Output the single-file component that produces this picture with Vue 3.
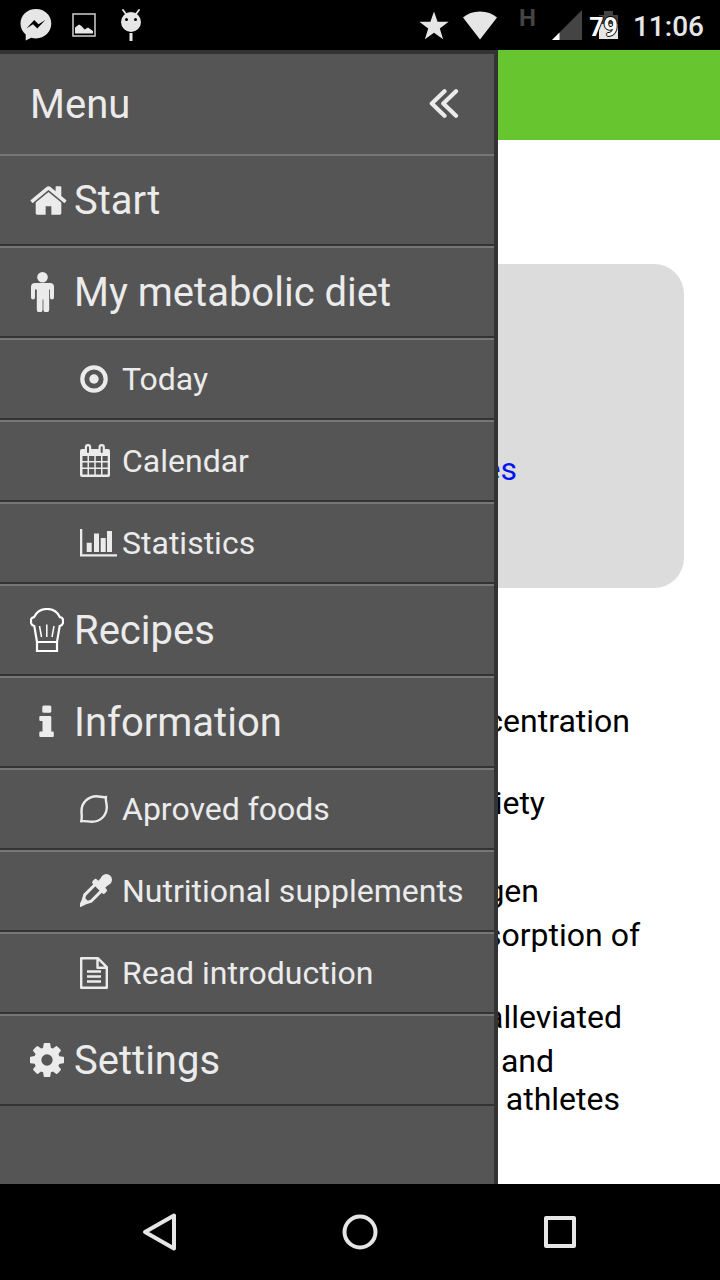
<script setup>
const menu = [
  { label: 'Start', icon: 'home' },
  { label: 'My metabolic diet', icon: 'person' },
  { label: 'Today', icon: 'target', sub: true },
  { label: 'Calendar', icon: 'calendar', sub: true },
  { label: 'Statistics', icon: 'chart', sub: true },
  { label: 'Recipes', icon: 'chef' },
  { label: 'Information', icon: 'info' },
  { label: 'Aproved foods', icon: 'leaf', sub: true },
  { label: 'Nutritional supplements', icon: 'dropper', sub: true },
  { label: 'Read introduction', icon: 'file', sub: true },
  { label: 'Settings', icon: 'gear' }
]

// Every benefit is a list of lines; `end` is the free space right of the line.
const benefits = [
  [{ text: 'concentration', end: 90 }, { text: '', end: 0 }],
  [{ text: 'iety', end: 175 }],
  [{ text: '', end: 0 }],
  [{ text: 'gen', end: 181 }],
  [{ text: 'sorption of', end: 80 }, { text: '', end: 0 }],
  [{ text: 'alleviated', end: 98 }],
  [{ text: 'and', end: 166 }, { text: 'athletes', end: 100 }]
]
</script>

<template>
  <div class="screen">
    <header class="status">
      <div class="notes">
        <svg width="32" height="32" viewBox="0 0 32 32">
          <path d="M16 0C7 0 .5 6.3.5 14.5c0 4.6 2 8.300 5.200 11V31.500l5.500-2.700c1.500.4 3.100.6 4.800.6 8.700 0 15.300-6.500 15.300-14.800S24.700 0 16 0z" fill="#e6e6e6" />
          <path d="M6.500 19.500L14.200 11l4.300 4.200 6.800-4.200-8 8.500-4.300-4.200z" fill="#000" />
        </svg>
        <svg width="24" height="24" viewBox="0 0 24 24">
          <rect x="1" y="1" width="22" height="22" fill="none" stroke="#c4c4c4" stroke-width="1.600" />
          <path d="M3 20.500v-6l4-3 2.500 1.500 3 3.500 3.500-2 5 3.500v2.500z" fill="#e6e6e6" />
        </svg>
        <svg width="22" height="32" viewBox="0 0 22 32">
          <path d="M3 1l3 4M19 1l-3 4" stroke="#e6e6e6" stroke-width="1.800" stroke-linecap="round" />
          <circle cx="11" cy="13" r="10" fill="#e6e6e6" />
          <circle cx="6.500" cy="10.500" r="1.500" fill="#000" />
          <circle cx="15.500" cy="10.500" r="1.500" fill="#000" />
          <rect x="9.500" y="24" width="3" height="8" fill="#e6e6e6" />
        </svg>
      </div>
      <div class="signals">
        <svg width="30" height="29" viewBox="0 0 30 29">
          <path d="M15 .5l3.600 10.300h11l-8.800 6.700 3.300 10.700L15 21.700l-9.100 6.500 3.300-10.700L.4 10.800h11z" fill="#e6e6e6" />
        </svg>
        <svg class="wifi" width="36" height="29" viewBox="0 0 36 29">
          <path d="M1 6.500C5.500 2.500 11 .5 18 .5s12.500 2 17 6L18 28.500z" fill="#e6e6e6" />
        </svg>
        <span class="network">H</span>
        <svg class="bars" width="30" height="30" viewBox="0 0 30 30">
          <path d="M30 0v30H0z" fill="#444" />
          <path d="M7.500 22.500V30H0z" fill="#fff" />
        </svg>
        <span class="battery">
          <svg width="20" height="30" viewBox="0 0 20 30">
            <path d="M5 1h9v4h5v9H0V5h5z" fill="#444" />
            <path d="M0 14h19v15H0z" fill="#e6e6e6" />
          </svg>
          <span class="level">79</span>
        </span>
        <time class="clock">11:06</time>
      </div>
    </header>

    <div class="stage">
      <main class="page">
        <div class="topbar"></div>
        <section class="card"><a href="#recipes">recipes</a></section>
        <ul class="benefits">
          <li v-for="(item, i) in benefits" :key="i">
            <span v-for="(line, j) in item" :key="j" :style="{ paddingRight: line.end + 'px' }">{{ line.text }}</span>
          </li>
        </ul>
      </main>

      <aside class="drawer">
        <div class="head">
          <h1>Menu</h1>
          <button type="button" aria-label="Close menu">
            <svg width="30" height="30" viewBox="0 0 30 30" fill="none" stroke="#ebebeb" stroke-width="4.200" stroke-linecap="round" stroke-linejoin="round">
              <path d="M15.500 2.300L2.800 14.500l12.700 12.200M27 2.300L14.300 14.500 27 26.700" />
            </svg>
          </button>
        </div>
        <nav>
          <a v-for="item in menu" :key="item.label" href="#" class="item" :class="{ sub: item.sub }">
            <span class="icon">
              <svg v-if="item.icon === 'home'" width="37" height="29" viewBox="64 256 1664 1280">
                <path d="M1472 992v480q0 26-19 45t-45 19h-384v-384h-256v384h-384q-26 0-45-19t-19-45v-480q0-1 .5-3t.5-3l575-474 575 474q1 2 1 6zm223-69l-62 74q-8 9-21 11h-3q-13 0-21-7l-692-577-692 577q-12 8-24 7-13-2-21-11l-62-74q-8-10-7-23.500t11-21.500l719-599q32-26 76-26t76 26l244 204v-195q0-14 9-23t23-9h192q14 0 23 9t9 23v408l219 182q10 8 11 21.500t-7 23.500z" />
              </svg>
              <svg v-else-if="item.icon === 'person'" width="26" height="40" viewBox="0 0 26 40">
                <circle cx="12.500" cy="5.300" r="5.300" />
                <path d="M5 11h15a4 4 0 0 1 4 4v10.500a2 2 0 0 1-4 0v-8h-.8v20a2.600 2.600 0 0 1-5.800 0V27.500h-.8v10a2.600 2.600 0 0 1-5.800 0v-20H5v8a2 2 0 0 1-4 0V15a4 4 0 0 1 4-4z" />
              </svg>
              <svg v-else-if="item.icon === 'target'" width="28" height="28" viewBox="0 0 28 28">
                <circle cx="14" cy="14" r="11.700" fill="none" stroke="#ebebeb" stroke-width="4.200" />
                <circle cx="14" cy="14" r="4.700" />
              </svg>
              <svg v-else-if="item.icon === 'calendar'" width="30" height="34" viewBox="0 0 30 34">
                <path fill-rule="evenodd" d="M2 5h26a2 2 0 0 1 2 2v24a2 2 0 0 1-2 2H2a2 2 0 0 1-2-2V7a2 2 0 0 1 2-2zM2.500 12v5h5v-5zM9 12v5h5.300v-5zM15.800 12v5H21v-5zM22.500 12v5h5.200v-5zM2.500 18.500v5h5v-5zM9 18.500v5h5.300v-5zM15.800 18.500v5H21v-5zM22.500 18.500v5h5.200v-5zM2.500 25v5.500h5V25zM9 25v5.500h5.300V25zM15.800 25v5.500H21V25zM22.500 25v5.500h5.200V25z" />
                <rect x="4.800" y="0" width="6.400" height="11" rx="3" />
                <rect x="18.500" y="0" width="6.400" height="11" rx="3" />
                <path d="M8 3.200v4.800M21.700 3.200v4.800" stroke="#555" stroke-width="2" stroke-linecap="round" />
              </svg>
              <svg v-else-if="item.icon === 'chart'" width="37" height="28" viewBox="0 0 37 28">
                <path d="M0 0h2.300v25.200H37v2.300H0zM6.700 13.700h5V23h-5zM14 4.500h5V23h-5zM20.700 9h5v14h-5zM27 2h5v21h-5z" />
              </svg>
              <svg v-else-if="item.icon === 'chef'" width="34" height="44" viewBox="0 0 34 44" fill="none" stroke="#fff" stroke-width="2.200">
                <path d="M7 34L4.300 18C2.500 17.500 1 16.500 1 14.500V12c0-1.500 1-2.500 3-2.800C6.500 4 11.500 1 17 1s10.500 3 13 8.200c2 .3 3 1.300 3 2.800v2.500c0 2-1.500 3-3.300 3.500L27 34z" />
                <path d="M7 34v9h20v-9" />
                <path d="M9.500 18l2 11M16.800 16.500V29M24 18l-2 11" stroke-width="1.500" />
              </svg>
              <svg v-else-if="item.icon === 'info'" width="26" height="34" viewBox="0 0 26 34">
                <rect x="12.300" y=".5" width="9" height="7.300" rx="1.500" />
                <path d="M10.300 11h10a1 1 0 0 1 1 1v14.500h1.500a1 1 0 0 1 1 1V31a1 1 0 0 1-1 1H10.300a1 1 0 0 1-1-1v-3.500a1 1 0 0 1 1-1h2.200V16h-2.200a1 1 0 0 1-1-1v-3a1 1 0 0 1 1-1z" />
              </svg>
              <svg v-else-if="item.icon === 'leaf'" width="28" height="28" viewBox="0 0 28 28" fill="none" stroke="#ebebeb" stroke-width="2.400" stroke-linejoin="round">
                <path d="M26 2C23 3 20 1.200 16.500 1.200c-8 0-15 6.300-15 14.800 0 4 .8 6.500-.3 10.300C4.500 25.500 8 26.800 12 26.800c8.500 0 14.800-6.500 14.800-14.800 0-4-1.600-6.500-.8-10z" />
              </svg>
              <svg v-else-if="item.icon === 'dropper'" width="32" height="34" viewBox="0 0 32 34">
                <g transform="translate(26.300 5.700) rotate(45)">
                  <circle r="5.700" />
                  <rect x="-5" y="0" width="10" height="10" />
                  <rect x="-8.700" y="6.500" width="17.400" height="6" rx="2" />
                  <path d="M-4.500 11v15l3 5.500L0 36l1.500-4.500 3-5.500V11" fill="none" stroke="#ebebeb" stroke-width="3" />
                  <path d="M-4 28h8L1.500 35 0 37l-1.500-2z" />
                </g>
              </svg>
              <svg v-else-if="item.icon === 'file'" width="28" height="32" viewBox="0 0 28 32" fill="none" stroke="#ebebeb" stroke-width="2.400" stroke-linejoin="round">
                <path d="M1.200 1.200h16.600l9 9v20.600H1.200zM17.500 1.200v9.500H27M7 14.500h14M7 19.500h14M7 24.500h14" />
              </svg>
              <svg v-else width="34" height="34" viewBox="128 128 1536 1536">
                <path d="M1152 896q0-106-75-181t-181-75-181 75-75 181 75 181 181 75 181-75 75-181zm512-109v222q0 12-8 23t-20 13l-185 28q-19 54-39 91 35 50 107 138 10 12 10 25t-9 23q-27 37-99 108t-94 71q-12 0-26-9l-138-108q-44 23-91 38-16 136-29 186-7 28-36 28h-222q-14 0-24.500-8.500t-11.500-21.500l-28-184q-49-16-90-37l-141 107q-10 9-25 9-14 0-25-11-126-114-165-168-7-10-7-23 0-12 8-23 15-21 51-66.500t54-70.500q-27-50-41-99l-183-27q-13-2-21-12.500t-8-23.500v-222q0-12 8-23t19-13l186-28q14-46 39-92-40-57-107-138-10-12-10-24 0-10 9-23 26-36 98.500-107.500t94.500-71.500q13 0 26 10l138 107q44-23 91-38 16-136 29-186 7-28 36-28h222q14 0 24.500 8.500t11.500 21.500l28 184q49 16 90 37l142-107q9-9 24-9 13 0 25 10 129 119 165 170 7 8 7 22 0 12-8 23-15 21-51 66.500t-54 70.500q26 50 41 98l183 28q13 2 21 12.500t8 23.500z" />
              </svg>
            </span>
            <span>{{ item.label }}</span>
          </a>
        </nav>
      </aside>
    </div>

    <footer class="navbar">
      <button type="button" aria-label="Back">
        <svg width="40" height="40" viewBox="0 0 40 40"><path d="M34 3.500v33L5 20z" /></svg>
      </button>
      <button type="button" aria-label="Home">
        <svg width="40" height="40" viewBox="0 0 40 40"><circle cx="20" cy="20" r="15.500" /></svg>
      </button>
      <button type="button" aria-label="Recent apps">
        <svg width="40" height="40" viewBox="0 0 40 40"><rect x="6" y="6" width="28" height="28" /></svg>
      </button>
    </footer>
  </div>
</template>

<style>
body {
  margin: 0;
  background: #fff;
}
</style>

<style scoped>
.screen {
  display: flex;
  flex-direction: column;
  min-height: 100vh;
  font-family: Roboto, "Liberation Sans", sans-serif;
}
svg {
  display: block;
  flex: none;
}
button {
  padding: 0;
  border: 0;
  background: none;
}
a {
  text-decoration: none;
}
.status {
  display: flex;
  justify-content: space-between;
  height: 50px;
  padding: 0 16px 0 20px;
  background: #000;
  color: #e6e6e6;
}
.notes,
.signals {
  display: flex;
  align-items: center;
}
.notes {
  gap: 20px;
}
.notes svg:last-child {
  margin-left: 4px;
}
.wifi {
  margin-left: 13px;
}
.network {
  margin: 0 16px 14px 21px;
  font-size: 24px;
  font-weight: 700;
  line-height: 28px;
  color: #444;
}
.battery {
  position: relative;
  margin: 0 14px 0 17px;
}
.level {
  position: absolute;
  right: 1px;
  top: 3px;
  font-size: 25px;
  font-weight: 700;
  line-height: 30px;
  color: #fff;
  text-shadow: 1px 0 #000, -1px 0 #000, 0 1px #000, 0 -1px #000;
}
.clock {
  padding-top: 2px;
  font-size: 28px;
  font-weight: 500;
}
.stage {
  position: relative;
  flex: 1;
}
.page {
  font-size: 32px;
  line-height: 38px;
}
.topbar {
  height: 90px;
  background: #67c52f;
}
.card {
  box-sizing: border-box;
  height: 324px;
  margin: 124px 36px 114px;
  padding: 186px 167px 0 0;
  border-radius: 30px;
  background: #dcdcdc;
  text-align: right;
}
.card a {
  color: #0414f0;
}
.benefits {
  display: grid;
  gap: 6px;
  margin: 0;
  padding: 0;
  list-style: none;
  text-align: right;
}
.benefits span {
  display: block;
  min-height: 38px;
}
.drawer {
  position: absolute;
  inset: 0 222px 0 0;
  box-sizing: border-box;
  border-top: 4px solid #333;
  border-right: 4px solid #333;
  background: #555;
  color: #ebebeb;
}
.head {
  display: flex;
  align-items: center;
  justify-content: space-between;
  height: 100px;
  padding: 0 35px 0 30px;
}
.head h1 {
  margin: 0;
  font-size: 40px;
  font-weight: 400;
}
.item {
  display: flex;
  align-items: center;
  box-sizing: border-box;
  height: 92px;
  padding-left: 30px;
  border-top: 2px solid #777;
  border-bottom: 2px solid #333;
  font-size: 40px;
  color: #ebebeb;
  fill: #ebebeb;
  white-space: nowrap;
}
.icon {
  width: 44px;
}
.sub {
  height: 82px;
  padding-left: 80px;
  font-size: 32px;
}
.sub .icon {
  width: 42px;
}
.navbar {
  display: flex;
  justify-content: center;
  gap: 160px;
  height: 96px;
  background: #000;
}
.navbar svg {
  fill: none;
  stroke: #e6e6e6;
  stroke-width: 4;
  stroke-linejoin: round;
}
</style>
